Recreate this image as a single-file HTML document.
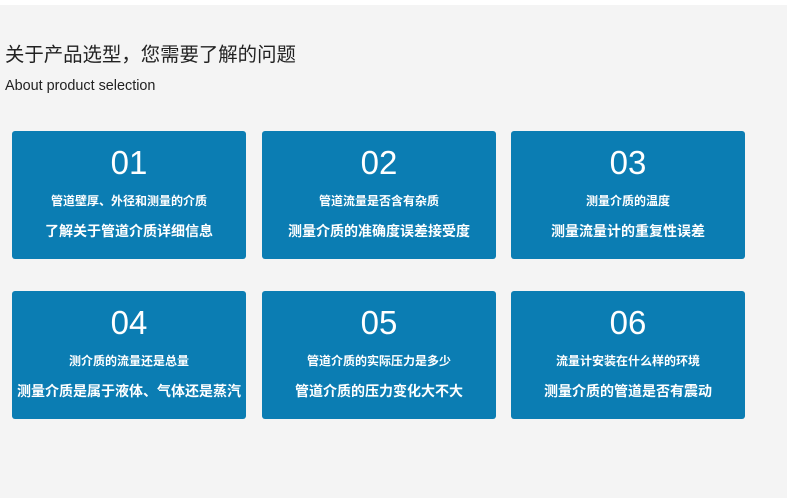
<!DOCTYPE html>
<html><head><meta charset="utf-8"><style>
body{margin:0;width:787px;height:498px;background:#f4f4f4;font-family:"Liberation Sans","Noto Sans CJK SC",sans-serif;position:relative;overflow:hidden}
.top{position:absolute;left:0;top:0;width:787px;height:5px;background:#fff}
h1{position:absolute;left:5px;top:41px;margin:0;font-size:19.4px;font-weight:normal;color:#222;line-height:28px}
.sub{position:absolute;left:5px;top:77px;font-size:14.4px;color:#222;line-height:18px}
.c{position:absolute;width:234px;height:128px;background:#0b7db3;border-radius:3px;color:#fff;text-align:center}
.n{position:absolute;top:12px;width:100%;font-size:33px;line-height:40px}
.a{position:absolute;top:62px;width:100%;font-size:12px;font-weight:bold;line-height:16px}
.b{position:absolute;top:91px;width:100%;font-size:14px;font-weight:bold;line-height:18px}
</style></head><body>
<div class="top"></div>
<h1>关于产品选型，您需要了解的问题</h1>
<div class="sub">About product selection</div>
<div class="c" style="left:12px;top:131px"><div class="n">01</div><div class="a">管道壁厚、外径和测量的介质</div><div class="b">了解关于管道介质详细信息</div></div>
<div class="c" style="left:262px;top:131px"><div class="n">02</div><div class="a">管道流量是否含有杂质</div><div class="b">测量介质的准确度误差接受度</div></div>
<div class="c" style="left:511px;top:131px"><div class="n">03</div><div class="a">测量介质的温度</div><div class="b">测量流量计的重复性误差</div></div>
<div class="c" style="left:12px;top:291px"><div class="n">04</div><div class="a">测介质的流量还是总量</div><div class="b">测量介质是属于液体、气体还是蒸汽</div></div>
<div class="c" style="left:262px;top:291px"><div class="n">05</div><div class="a">管道介质的实际压力是多少</div><div class="b">管道介质的压力变化大不大</div></div>
<div class="c" style="left:511px;top:291px"><div class="n">06</div><div class="a">流量计安装在什么样的环境</div><div class="b">测量介质的管道是否有震动</div></div>
</body></html>
